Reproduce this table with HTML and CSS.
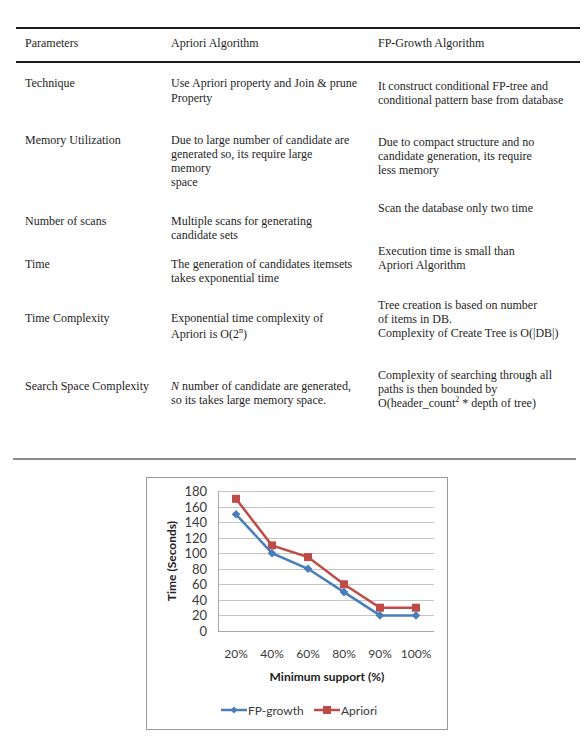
FILE: index.html
```html
<!DOCTYPE html>
<html>
<head>
<meta charset="utf-8">
<link rel="stylesheet" href="styles.css">
</head>
<body>
<div class="page">
  <div class="table">
    <div class="row head">
      <div class="c1">Parameters</div>
      <div class="c2">Apriori Algorithm</div>
      <div class="c3">FP-Growth Algorithm</div>
    </div>
    <div class="row r1">
      <div class="c1">Technique</div>
      <div class="c2 lh15">Use Apriori property and Join &amp; prune<br>Property</div>
      <div class="c3">It construct conditional FP-tree and<br>conditional pattern base from database</div>
    </div>
    <div class="row r2">
      <div class="c1">Memory Utilization</div>
      <div class="c2">Due to large number of candidate are<br>generated so, its require large<br>memory<br>space</div>
      <div class="c3">Due to compact structure and no<br>candidate generation, its require<br>less memory</div>
    </div>
    <div class="row r3">
      <div class="c1">Number of scans</div>
      <div class="c2">Multiple scans for generating<br>candidate sets</div>
      <div class="c3">Scan the database only two time</div>
    </div>
    <div class="row r4">
      <div class="c1">Time</div>
      <div class="c2">The generation of candidates itemsets<br>takes exponential time</div>
      <div class="c3">Execution time is small than<br>Apriori Algorithm</div>
    </div>
    <div class="row r5">
      <div class="c1">Time Complexity</div>
      <div class="c2 lh16">Exponential time complexity of<br>Apriori is O(2<sup>n</sup>)</div>
      <div class="c3">Tree creation is based on number<br>of items in DB.<br>Complexity of Create Tree is O(|DB|)</div>
    </div>
    <div class="row r6">
      <div class="c1">Search Space Complexity</div>
      <div class="c2"><i>N</i> number of candidate are generated,<br>so its takes large memory space.</div>
      <div class="c3">Complexity of searching through all<br>paths is then bounded by<br>O(header_count<sup>2</sup> * depth of tree)</div>
    </div>
  </div>
  <div class="rule"></div>
  <div class="chart">
    <svg width="300" height="251" viewBox="0 0 300 251" xmlns="http://www.w3.org/2000/svg">
      <g stroke="#c4c4c4" stroke-width="1">
        <line x1="71" y1="13.5" x2="287" y2="13.5"/>
        <line x1="71" y1="29.5" x2="287" y2="29.5"/>
        <line x1="71" y1="44.5" x2="287" y2="44.5"/>
        <line x1="71" y1="60.5" x2="287" y2="60.5"/>
        <line x1="71" y1="75.5" x2="287" y2="75.5"/>
        <line x1="71" y1="91.5" x2="287" y2="91.5"/>
        <line x1="71" y1="106.5" x2="287" y2="106.5"/>
        <line x1="71" y1="122.5" x2="287" y2="122.5"/>
        <line x1="71" y1="137.5" x2="287" y2="137.5"/>
      </g>
      <g stroke="#a8a8a8" stroke-width="1">
        <line x1="71" y1="153.5" x2="287" y2="153.5"/>
        <line x1="71.5" y1="13" x2="71.5" y2="154"/>
      </g>
      <g class="ylab" text-anchor="end">
        <text x="60" y="18">180</text>
        <text x="60" y="33.5">160</text>
        <text x="60" y="49">140</text>
        <text x="60" y="64.5">120</text>
        <text x="60" y="80">100</text>
        <text x="60" y="95.5">80</text>
        <text x="60" y="111">60</text>
        <text x="60" y="126.5">40</text>
        <text x="60" y="142">20</text>
        <text x="60" y="157.5">0</text>
      </g>
      <g class="xlab" text-anchor="middle">
        <text x="89" y="179.5">20%</text>
        <text x="125" y="179.5">40%</text>
        <text x="161" y="179.5">60%</text>
        <text x="197" y="179.5">80%</text>
        <text x="233" y="179.5">90%</text>
        <text x="269" y="179.5">100%</text>
      </g>
      <text class="title" x="180" y="202.5" text-anchor="middle">Minimum support (%)</text>
      <text class="title" transform="translate(29 83) rotate(-90)" text-anchor="middle">Time (Seconds)</text>
      <polyline fill="none" stroke="#be4b48" stroke-width="2.5" points="89,20.8 125,67.4 161,79.1 197,106.3 233,129.7 269,129.7"/>
      <g fill="#be4b48">
        <rect x="85" y="16.8" width="8" height="8"/>
        <rect x="121" y="63.4" width="8" height="8"/>
        <rect x="157" y="75.1" width="8" height="8"/>
        <rect x="193" y="102.3" width="8" height="8"/>
        <rect x="229" y="125.7" width="8" height="8"/>
        <rect x="265" y="125.7" width="8" height="8"/>
      </g>
      <polyline fill="none" stroke="#4a7ebb" stroke-width="2.5" points="89,36.3 125,75.2 161,90.8 197,114.1 233,137.4 269,137.4"/>
      <g fill="#4a7ebb">
        <polygon points="89,32 93.3,36.3 89,40.6 84.7,36.3"/>
        <polygon points="125,70.9 129.3,75.2 125,79.5 120.7,75.2"/>
        <polygon points="161,86.5 165.3,90.8 161,95.1 156.7,90.8"/>
        <polygon points="197,109.8 201.3,114.1 197,118.4 192.7,114.1"/>
        <polygon points="233,133.1 237.3,137.4 233,141.7 228.7,137.4"/>
        <polygon points="269,133.1 273.3,137.4 269,141.7 264.7,137.4"/>
      </g>
      <line x1="74" y1="232" x2="100" y2="232" stroke="#4a7ebb" stroke-width="2.5"/>
      <polygon points="87,228.5 90.5,232 87,235.5 83.5,232" fill="#4a7ebb"/>
      <text class="leg" x="101" y="236.5">FP-growth</text>
      <line x1="167" y1="232" x2="193" y2="232" stroke="#be4b48" stroke-width="2.5"/>
      <rect x="176" y="228" width="8" height="8" fill="#be4b48"/>
      <text class="leg" x="194" y="236.5">Apriori</text>
    </svg>
  </div>
</div>
</body>
</html>
```
FILE: styles.css
```css
html, body {
  margin: 0;
  padding: 0;
  background: #ffffff;
}

.page {
  width: 587px;
  height: 750px;
  padding-top: 27px;
  box-sizing: border-box;
}

.table {
  margin-left: 16px;
  width: 564px;
  border-top: 2px solid #1a1a1a;
  font-family: "Liberation Serif", "Times New Roman", serif;
  font-size: 12px;
  line-height: 14px;
  color: #1e1e1e;
}

.row {
  display: grid;
  grid-template-columns: 155px 207px 1fr;
}

.row .c1 {
  padding-left: 9px;
}

.row .c3 {
  padding-left: 0;
}

.lh15 { line-height: 15px; }
.lh16 { line-height: 16px; }

sup {
  font-size: 8px;
  line-height: 0;
  vertical-align: 5px;
}

.head {
  height: 32px;
  border-bottom: 2px solid #1a1a1a;
}
.head > div { padding-top: 7px; }

.r1 { height: 63px; }
.r1 .c1, .r1 .c2 { padding-top: 13px; }
.r1 .c3 { padding-top: 16px; }

.r2 { height: 69px; }
.r2 .c1, .r2 .c2 { padding-top: 7px; }
.r2 .c3 { padding-top: 9px; }

.r3 { height: 49px; }
.r3 .c1, .r3 .c2 { padding-top: 19px; }
.r3 .c3 { padding-top: 6px; }

.r4 { height: 52px; }
.r4 .c1, .r4 .c2 { padding-top: 13px; }
.r4 .c3 { padding-top: 0; }

.r5 { height: 69px; }
.r5 .c1 { padding-top: 15px; }
.r5 .c2 { padding-top: 14px; }
.r5 .c3 { padding-top: 2px; }

.r6 { height: 93px; }
.r6 .c1, .r6 .c2 { padding-top: 14px; }
.r6 .c3 { padding-top: 3px; }

.rule {
  margin-left: 13px;
  width: 563px;
  height: 2px;
  background: #8c8c8c;
}

.chart {
  margin-top: 17px;
  margin-left: 146px;
  width: 300px;
  height: 251px;
  border: 1px solid #9a9a9a;
}

.chart svg {
  display: block;
  font-family: Lato, "Open Sans", sans-serif;
  font-size: 12px;
  fill: #333;
}

.ylab text {
  fill: #3a3a3a;
  font-size: 13px;
}

.xlab text, .leg {
  fill: #3a3a3a;
  font-size: 12px;
}

.title {
  font-weight: bold;
  font-size: 12px;
  fill: #222;
}
```
